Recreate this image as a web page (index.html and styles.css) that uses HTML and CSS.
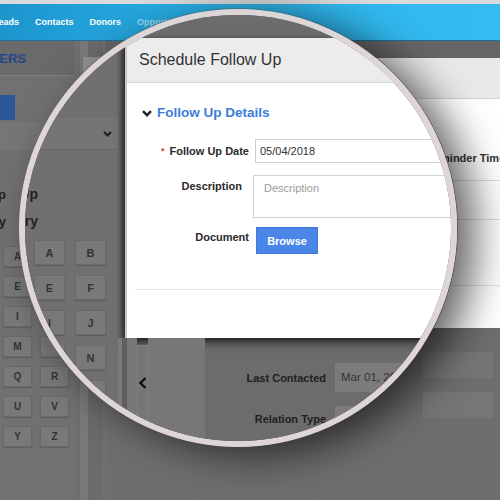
FILE: index.html
```html
<!DOCTYPE html>
<html lang="en">

<head>
    <meta charset="UTF-8">
    <title>Schedule Follow Up</title>
    <link rel="stylesheet" href="styles.css">
</head>

<body>
    <div class="top-strip"></div>
    <nav class="nav">
        <span>Leads</span>
        <span>Contacts</span>
        <span>Donors</span>
        <span class="faded">Opportunities</span>
    </nav>

    <div class="main">
        <aside class="side">
            <div class="side-title"><span>MEMBERS</span></div>
            <div class="side-add"></div>
            <div class="side-select"></div>
            <ul class="side-links">
                <li>Follow Up</li>
                <li>Category</li>
            </ul>
            <!-- second column of the first rows sits under the lens -->
            <div class="letters">
                <span>A</span><span></span>
                <span>E</span><span></span>
                <span>I</span><span></span>
                <span>M</span><span></span>
                <span>Q</span><span>R</span>
                <span>U</span><span>V</span>
                <span>Y</span><span>Z</span>
            </div>
        </aside>
        <div class="strip">
            <div class="search"></div>
        </div>
        <section class="content">
            <div class="content-top"></div>
            <div class="dlg">
                <div class="dlg-head"></div>
                <div class="dlg-body">
                    <div class="dlg-label">Reminder Time</div>
                    <div class="dlg-box"></div>
                    <div class="dlg-line"></div>
                </div>
            </div>
            <div class="ghost-rows">
                <div class="ghost"></div>
                <div class="ghost"></div>
            </div>
        </section>
    </div>

    <!-- magnifier over the page -->
    <div class="lens">
        <div class="lens-view">
            <aside class="l-side">
                <div class="l-select">
                    <svg width="9" height="6" viewBox="0 0 9 6"><polyline points="1,1 4.5,4.5 8,1" fill="none" stroke="#1e1e1e" stroke-width="2"/></svg>
                </div>
                <ul class="l-links">
                    <li>Follow Up</li>
                    <li>Category</li>
                </ul>
                <div class="l-letters">
                    <span>A</span><span>B</span>
                    <span>E</span><span>F</span>
                    <span>I</span><span>J</span>
                    <span></span><span>N</span>
                    <span></span><span></span>
                </div>
            </aside>
            <div class="l-main">
                <div class="modal">
                    <div class="modal-head">Schedule Follow Up</div>
                    <div class="modal-body">
                        <h4 class="sec-title">
                            <svg width="10" height="7" viewBox="0 0 10 7"><polyline points="1,1.2 5,5.2 9,1.2" fill="none" stroke="#222" stroke-width="2.4"/></svg>
                            Follow Up Details
                        </h4>
                        <div class="form">
                            <label><i>*</i>Follow Up Date</label>
                            <div class="field">05/04/2018</div>
                            <label class="top desc">Description</label>
                            <div class="area">Description</div>
                            <label class="top doc">Document</label>
                            <div><button class="browse">Browse</button></div>
                        </div>
                        <div class="sep"></div>
                    </div>
                </div>
                <div class="l-below">
                    <div class="l-strip"></div>
                    <div class="l-tab">
                        <svg width="8" height="12" viewBox="0 0 8 12"><polyline points="6.5,1 1.5,6 6.5,11" fill="none" stroke="#111" stroke-width="2.4"/></svg>
                    </div>
                    <div class="l-panel"></div>
                    <div class="l-form">
                        <label>Last Contacted</label>
                        <div class="l-input">Mar 01, 2018</div>
                        <label>Relation Type</label>
                        <div class="l-input short"></div>
                    </div>
                </div>
            </div>
        </div>
    </div>
</body>

</html>
```

FILE: styles.css
```css
* {
    box-sizing: border-box;
}

body {
    margin: 0;
    width: 500px;
    height: 500px;
    overflow: hidden;
    position: relative;
    background: #6e6e6e;
    font-family: 'Liberation Sans', Arial, sans-serif;
    color: #2a2a2a;
}

ul {
    margin: 0;
    padding: 0;
    list-style: none;
}

/* page behind the lens */
.top-strip {
    height: 4px;
    background: #dadada;
}

.nav {
    height: 37px;
    display: flex;
    align-items: center;
    gap: 16px;
    background: linear-gradient(90deg, #1c95cd, #2bb2e9 45%, #35bdf2);
    border-bottom: 1px solid #16729c;
    font-size: 9px;
    font-weight: bold;
    color: #fff;
}

.nav span:first-child {
    margin-left: -7px;
}

.nav .faded {
    color: rgba(255, 255, 255, 0.55);
}

.main {
    display: grid;
    grid-template-columns: 75px 30px 1fr;
    height: 459px;
}

.side {
    background: #717171;
}

.side-title {
    height: 35px;
    padding-top: 10px;
    background: #6a6a6a;
    border-bottom: 1px solid #7d7d7d;
}

.side-title span {
    display: flex;
    justify-content: flex-end;
    width: 26px;
    font-size: 13px;
    font-weight: bold;
    color: #25468a;
}

.side-add {
    width: 15px;
    height: 25px;
    margin-top: 19px;
    background: #2c5797;
}

.side-select {
    height: 28px;
    margin-top: 2px;
    background: #767676;
}

.side-links {
    margin-top: 31px;
}

.side-links li,
.l-links li {
    display: flex;
    justify-content: flex-end;
    white-space: nowrap;
    line-height: 27px;
    font-size: 13px;
    font-weight: bold;
    color: #222;
}

.side-links li {
    width: 6px;
}

.letters {
    display: grid;
    grid-template-columns: 29px 29px;
    grid-auto-rows: 21px;
    column-gap: 8px;
    row-gap: 9px;
    margin: 11px 0 0 3px;
}

.letters span,
.l-letters span {
    display: flex;
    align-items: center;
    justify-content: center;
    background: #797979;
    border: 1px solid #6a6a6a;
    box-shadow: 0 1px 1px rgba(0, 0, 0, 0.15);
    font-size: 10px;
    font-weight: bold;
    color: #333;
}

.strip {
    background: linear-gradient(90deg, #6f6f6f 0 5px, #797979 5px 13px, #6b6b6b 13px 28px, #727272 28px);
}

.search {
    width: 40px;
    height: 20px;
    margin: 16px 0 0 8px;
    background: #929292;
}

.content-top {
    height: 17px;
    background: #666;
}

.dlg {
    height: 270px;
    margin-left: 105px;
    background: #fff;
}

.dlg-head {
    height: 41px;
    background: #e9e9e9;
    border-bottom: 1px solid #d3d3d3;
}

.dlg-body {
    padding-top: 52px;
}

.dlg-label {
    margin-left: 216px;
    line-height: 14px;
    font-size: 11px;
    font-weight: bold;
    color: #333;
    white-space: nowrap;
}

.dlg-box {
    height: 40px;
    margin: 15px 0 0 220px;
    border: 1px solid #dcdcdc;
}

.dlg-line {
    height: 1px;
    margin-top: 65px;
    background: #e2e2e2;
}

.ghost-rows {
    display: flex;
    flex-direction: column;
    gap: 14px;
    margin: 24px 0 0 318px;
}

.ghost {
    width: 70px;
    height: 26px;
    background: #767676;
}

/* the lens */
.lens {
    position: absolute;
    left: 19px;
    top: 9px;
    width: 438px;
    height: 438px;
    border-radius: 50%;
    border: 6px solid #ddd5d6;
    overflow: hidden;
    box-shadow: 18px 8px 40px rgba(0, 0, 0, 0.62), 0 0 0 1px rgba(120, 110, 110, 0.5);
}

.lens-view {
    width: 500px;
    height: 500px;
    margin: -15px 0 0 -25px;
    display: grid;
    grid-template-columns: 118px 382px;
    background: #6f6f6f;
}

.l-side {
    background: #707070;
}

.l-select {
    height: 32px;
    margin-top: 118px;
    padding-right: 6px;
    display: flex;
    align-items: center;
    justify-content: flex-end;
    background: #757575;
    border-bottom: 1px solid #686868;
}

.l-links {
    margin-top: 31px;
}

.l-links li {
    width: 38px;
    font-size: 14px;
}

.l-letters {
    display: grid;
    grid-template-columns: 31px 31px;
    grid-auto-rows: 25px;
    gap: 10px;
    margin: 5px 0 0 34px;
}

.l-letters span {
    font-size: 11px;
}

.l-main {
    background: #6c6c6c;
}

.modal {
    width: 400px;
    height: 300px;
    margin: 38px 0 0 7px;
    background: #fff;
    border-left: 2px solid #c9c9c9;
    box-shadow: -3px 2px 5px rgba(0, 0, 0, 0.45), 0 5px 9px rgba(0, 0, 0, 0.5);
}

.modal-head {
    height: 45px;
    padding-left: 12px;
    line-height: 44px;
    font-size: 16px;
    color: #333;
    background: #ececec;
    border-bottom: 1px solid #d6d6d6;
}

.sec-title {
    display: flex;
    align-items: center;
    gap: 5px;
    margin: 0;
    padding: 20px 0 0 15px;
    line-height: 20px;
    font-size: 13.5px;
    font-weight: bold;
    color: #3b7ddd;
}

.form {
    display: grid;
    grid-template-columns: 122px 1fr;
    column-gap: 6px;
    margin-top: 16px;
}

.form label {
    display: flex;
    align-items: center;
    justify-content: flex-end;
    font-size: 11px;
    font-weight: bold;
    color: #2a2a2a;
}

.form label i {
    font-style: normal;
    font-size: 9px;
    color: #e04444;
    margin-right: 5px;
}

.form .top {
    align-items: flex-start;
    line-height: 14px;
}

.form .desc {
    padding: 16px 7px 0 0;
}

.form .doc {
    padding-top: 12px;
}

.field {
    width: 260px;
    height: 24px;
    padding-left: 4px;
    line-height: 22px;
    font-size: 11px;
    color: #333;
    border: 1px solid #cfcfcf;
}

.area {
    width: 260px;
    height: 43px;
    margin: 12px 0 0 -2px;
    padding: 5px 10px;
    line-height: 14px;
    font-size: 11px;
    color: #9a9a9a;
    border: 1px solid #d2d2d2;
}

.browse {
    width: 62px;
    height: 27px;
    margin: 9px 0 0 1px;
    border: 1px solid #3f78d6;
    background: #4a86e8;
    color: #fff;
    font-family: inherit;
    font-size: 11px;
    font-weight: bold;
}

.sep {
    height: 1px;
    margin: 35px 0 0 8px;
    background: #e3e3e3;
}

.l-below {
    display: grid;
    grid-template-columns: 19px 11px 57px 1fr;
    height: 162px;
}

.l-strip {
    background: linear-gradient(90deg, #7a7a7a 0 4px, #5f5f5f 4px 9px, #777 9px);
}

.l-tab {
    height: 75px;
    margin-top: 7px;
    display: flex;
    align-items: center;
    justify-content: center;
    background: #767676;
    border: 1px solid #818181;
}

.l-panel {
    background: #777;
}

.l-form {
    display: grid;
    grid-template-columns: 121px 1fr;
    grid-template-rows: 29px 26px;
    column-gap: 9px;
    row-gap: 14px;
    margin-top: 25px;
}

.l-form label {
    display: flex;
    align-items: center;
    justify-content: flex-end;
    white-space: nowrap;
    font-size: 11px;
    font-weight: bold;
    color: #1f1f1f;
}

.l-input {
    width: 170px;
    padding-left: 6px;
    line-height: 29px;
    font-size: 11.5px;
    color: #333;
    background: #7b7b7b;
}
```
